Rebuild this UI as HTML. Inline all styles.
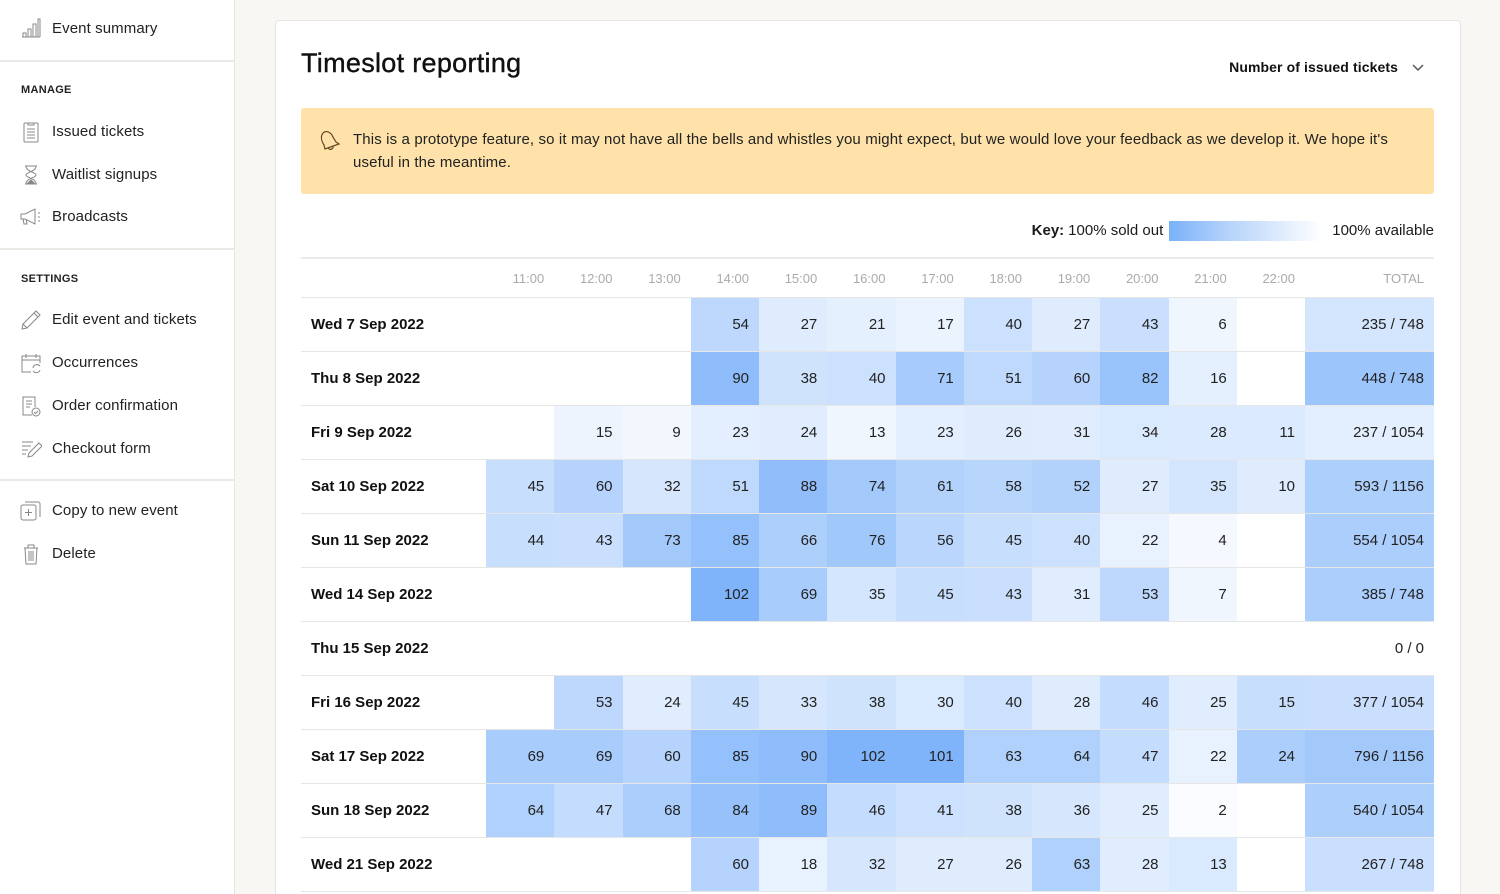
<!DOCTYPE html>
<html style="width:1500px;height:894px;overflow:hidden"><head><meta charset="utf-8"><style>
*{box-sizing:border-box;margin:0;padding:0}
body{width:1500px;height:894px;overflow:hidden;background:#f9f7f3;font-family:"Liberation Sans",sans-serif;color:#1a1a1a;position:relative}
.side{position:absolute;left:0;top:0;width:235px;height:894px;background:#fff;border-right:1px solid #e6e4e0}
.it{position:absolute;left:52px;font-size:15px;color:#222;line-height:20px;letter-spacing:.1px}
.ic{position:absolute;left:20px;width:22px;height:22px}
.hd{position:absolute;left:21px;font-size:11px;font-weight:bold;letter-spacing:.3px;color:#222}
.hr{position:absolute;left:0;width:235px;height:2px;background:#ebe9e6}
.card{position:absolute;left:275px;top:20px;width:1186px;height:874px;background:#fff;border:1px solid #e8e6e2;border-bottom:none;border-radius:4px 4px 0 0}
h1{position:absolute;left:301px;top:48px;font-size:27px;font-weight:normal;letter-spacing:.3px;color:#111;-webkit-text-stroke:.4px #111}
.dd{position:absolute;right:76px;top:59px;font-size:14px;font-weight:bold;color:#111;letter-spacing:.1px}
.ban{position:absolute;left:301px;top:108px;width:1133px;height:86px;background:#fee2a9;border-radius:3px;font-size:15px;line-height:22.5px;padding:21px 40px 0 52px;color:#222;letter-spacing:.13px}
.key{position:absolute;right:66px;top:221px;font-size:15px;height:20px;line-height:20px;display:flex;align-items:center;gap:4px}
.bar{width:153px;height:20px;background:linear-gradient(90deg,#7ab1f8,#b7d4fb 40%,#fff 100%);margin:0 6px 0 2px}
table{position:absolute;left:301px;top:257px;border-collapse:collapse;table-layout:fixed;width:1133px;font-size:15px}
td,th{height:54px;text-align:right;padding-right:10px;border-bottom:1px solid #e6e6e6;color:#222;font-weight:normal}
tr:first-child th{height:39px;color:#aaa;font-size:13px;border-top:2px solid #ebebeb;border-bottom:1px solid #e6e6e6;padding-right:10px;padding-top:2px}
td.d{text-align:left;padding-left:10px;font-weight:bold;color:#111}
</style></head><body>
<div class="side">
<svg class="ic" style="top:17px" viewBox="0 0 22 22" fill="none" stroke="#888" stroke-width="1"><path d="M2 20h18M3 20v-4h3v4M8 20V12h3v8M13 20V7h3v13M18 20V2h2v18"/></svg>
<div class="it" style="top:19px">Event summary</div>
<div class="hr" style="top:60px"></div>
<div class="hd" style="top:84px">MANAGE</div>
<svg class="ic" style="top:121px" viewBox="0 0 22 22" fill="none" stroke="#888"><rect x="4" y="2" width="14" height="19" rx="1"/><path d="M8 2v2h6V2M7 8h8M7 11h8M7 14h8M7 17h8"/></svg>
<div class="it" style="top:122px">Issued tickets</div>
<svg class="ic" style="top:164px" viewBox="0 0 22 22" fill="none" stroke="#888"><path d="M5 2h12M5 20h12M6 2c0 6 10 6 10 9s-10 3-10 9M16 2c0 6-10 6-10 9s10 3 10 9"/><path d="M8 19l3-3 3 3z" fill="#888"/></svg>
<div class="it" style="top:165px">Waitlist signups</div>
<svg class="ic" style="top:206px" viewBox="0 0 22 22" fill="none" stroke="#888"><path d="M1 8h4l10-5v15L5 13H1zM3 13l1 5h3l-1-5M18 7h2M18 11h2M18 15h2"/></svg>
<div class="it" style="top:207px">Broadcasts</div>
<div class="hr" style="top:248px"></div>
<div class="hd" style="top:273px">SETTINGS</div>
<svg class="ic" style="top:309px" viewBox="0 0 22 22" fill="none" stroke="#888"><path d="M2 20l1-5L16 2l4 4L7 19zM3 15l4 4M14 4l4 4"/></svg>
<div class="it" style="top:310px">Edit event and tickets</div>
<svg class="ic" style="top:352px" viewBox="0 0 22 22" fill="none" stroke="#888"><path d="M11 20H2V4h18v7M2 8h18M6 2v4M16 2v4M13 16a4 4 0 0 1 7-2M20 18a4 4 0 0 1-7 1"/></svg>
<div class="it" style="top:353px">Occurrences</div>
<svg class="ic" style="top:395px" viewBox="0 0 22 22" fill="none" stroke="#888"><path d="M12 20H3V2h12v10M6 6h6M6 9h6M6 12h4"/><circle cx="16" cy="17" r="4"/><path d="M14 17l1.5 1.5L18 16"/></svg>
<div class="it" style="top:396px">Order confirmation</div>
<svg class="ic" style="top:438px" viewBox="0 0 22 22" fill="none" stroke="#888"><path d="M2 4h11M2 8h9M2 12h6M2 16h4M8 19l1-4L19 5l3 3L12 18z"/></svg>
<div class="it" style="top:439px">Checkout form</div>
<div class="hr" style="top:479px"></div>
<svg class="ic" style="top:500px" viewBox="0 0 22 22" fill="none" stroke="#888"><rect x="1" y="5" width="15" height="15" rx="2"/><path d="M5 2h13a2 2 0 0 1 2 2v13M8.5 9v7M5 12.5h7"/></svg>
<div class="it" style="top:501px">Copy to new event</div>
<svg class="ic" style="top:543px" viewBox="0 0 22 22" fill="none" stroke="#888"><path d="M4 5h14M8 5V2h6v3M5 5l1 16h10l1-16M9 8v10M11 8v10M13 8v10"/></svg>
<div class="it" style="top:544px">Delete</div>
</div>
<div class="card"></div>
<h1>Timeslot reporting</h1>
<div class="dd">Number of issued tickets <svg width="12" height="8" viewBox="0 0 12 8" style="margin-left:10px" fill="none" stroke="#555" stroke-width="1.5"><path d="M1 1l5 5 5-5"/></svg></div>
<div class="ban"><svg style="position:absolute;left:18px;top:22px" width="22" height="22" viewBox="0 0 22 22" fill="none" stroke="#5a4520" stroke-width="1.2"><path d="M4 3c3-3 8-1 10 4l3 5 3 2-14 5-1-4C3 12 1 7 4 3zM9 17.5a2.5 2.5 0 0 0 5-1.5"/></svg>This is a prototype feature, so it may not have all the bells and whistles you might expect, but we would love your feedback as we develop it. We hope it's useful in the meantime.</div>
<div class="key"><b>Key:</b> 100% sold out <div class="bar"></div>100% available</div>
<table>
<colgroup><col style="width:185px"><col span="12" style="width:68.25px"><col style="width:129px"></colgroup>
<tr><th></th><th>11:00</th><th>12:00</th><th>13:00</th><th>14:00</th><th>15:00</th><th>16:00</th><th>17:00</th><th>18:00</th><th>19:00</th><th>20:00</th><th>21:00</th><th>22:00</th><th>TOTAL</th></tr>
<tr><td class="d">Wed 7 Sep 2022</td><td></td><td></td><td></td><td style="background:rgba(1,105,245,.26)">54</td><td style="background:rgba(1,105,245,.13)">27</td><td style="background:rgba(1,105,245,.10)">21</td><td style="background:rgba(1,105,245,.08)">17</td><td style="background:rgba(1,105,245,.20)">40</td><td style="background:rgba(1,105,245,.13)">27</td><td style="background:rgba(1,105,245,.21)">43</td><td style="background:rgba(1,105,245,.06)">6</td><td></td><td style="background:rgba(1,105,245,.17)">235 / 748</td></tr>
<tr><td class="d">Thu 8 Sep 2022</td><td></td><td></td><td></td><td style="background:rgba(1,105,245,.44)">90</td><td style="background:rgba(1,105,245,.19)">38</td><td style="background:rgba(1,105,245,.20)">40</td><td style="background:rgba(1,105,245,.35)">71</td><td style="background:rgba(1,105,245,.25)">51</td><td style="background:rgba(1,105,245,.29)">60</td><td style="background:rgba(1,105,245,.40)">82</td><td style="background:rgba(1,105,245,.10)">16</td><td></td><td style="background:rgba(1,105,245,.39)">448 / 748</td></tr>
<tr><td class="d">Fri 9 Sep 2022</td><td></td><td style="background:rgba(1,105,245,.07)">15</td><td style="background:rgba(1,105,245,.05)">9</td><td style="background:rgba(1,105,245,.11)">23</td><td style="background:rgba(1,105,245,.12)">24</td><td style="background:rgba(1,105,245,.06)">13</td><td style="background:rgba(1,105,245,.11)">23</td><td style="background:rgba(1,105,245,.13)">26</td><td style="background:rgba(1,105,245,.12)">31</td><td style="background:rgba(1,105,245,.15)">34</td><td style="background:rgba(1,105,245,.14)">28</td><td style="background:rgba(1,105,245,.14)">11</td><td style="background:rgba(1,105,245,.11)">237 / 1054</td></tr>
<tr><td class="d">Sat 10 Sep 2022</td><td style="background:rgba(1,105,245,.22)">45</td><td style="background:rgba(1,105,245,.29)">60</td><td style="background:rgba(1,105,245,.16)">32</td><td style="background:rgba(1,105,245,.25)">51</td><td style="background:rgba(1,105,245,.43)">88</td><td style="background:rgba(1,105,245,.36)">74</td><td style="background:rgba(1,105,245,.30)">61</td><td style="background:rgba(1,105,245,.28)">58</td><td style="background:rgba(1,105,245,.30)">52</td><td style="background:rgba(1,105,245,.13)">27</td><td style="background:rgba(1,105,245,.17)">35</td><td style="background:rgba(1,105,245,.13)">10</td><td style="background:rgba(1,105,245,.32)">593 / 1156</td></tr>
<tr><td class="d">Sun 11 Sep 2022</td><td style="background:rgba(1,105,245,.22)">44</td><td style="background:rgba(1,105,245,.21)">43</td><td style="background:rgba(1,105,245,.36)">73</td><td style="background:rgba(1,105,245,.42)">85</td><td style="background:rgba(1,105,245,.32)">66</td><td style="background:rgba(1,105,245,.37)">76</td><td style="background:rgba(1,105,245,.27)">56</td><td style="background:rgba(1,105,245,.22)">45</td><td style="background:rgba(1,105,245,.20)">40</td><td style="background:rgba(1,105,245,.09)">22</td><td style="background:rgba(1,105,245,.04)">4</td><td></td><td style="background:rgba(1,105,245,.33)">554 / 1054</td></tr>
<tr><td class="d">Wed 14 Sep 2022</td><td></td><td></td><td></td><td style="background:rgba(1,105,245,.50)">102</td><td style="background:rgba(1,105,245,.34)">69</td><td style="background:rgba(1,105,245,.17)">35</td><td style="background:rgba(1,105,245,.22)">45</td><td style="background:rgba(1,105,245,.21)">43</td><td style="background:rgba(1,105,245,.12)">31</td><td style="background:rgba(1,105,245,.26)">53</td><td style="background:rgba(1,105,245,.06)">7</td><td></td><td style="background:rgba(1,105,245,.33)">385 / 748</td></tr>
<tr><td class="d">Thu 15 Sep 2022</td><td></td><td></td><td></td><td></td><td></td><td></td><td></td><td></td><td></td><td></td><td></td><td></td><td>0 / 0</td></tr>
<tr><td class="d">Fri 16 Sep 2022</td><td></td><td style="background:rgba(1,105,245,.26)">53</td><td style="background:rgba(1,105,245,.12)">24</td><td style="background:rgba(1,105,245,.22)">45</td><td style="background:rgba(1,105,245,.16)">33</td><td style="background:rgba(1,105,245,.19)">38</td><td style="background:rgba(1,105,245,.15)">30</td><td style="background:rgba(1,105,245,.20)">40</td><td style="background:rgba(1,105,245,.13)">28</td><td style="background:rgba(1,105,245,.23)">46</td><td style="background:rgba(1,105,245,.12)">25</td><td style="background:rgba(1,105,245,.22)">15</td><td style="background:rgba(1,105,245,.21)">377 / 1054</td></tr>
<tr><td class="d">Sat 17 Sep 2022</td><td style="background:rgba(1,105,245,.34)">69</td><td style="background:rgba(1,105,245,.34)">69</td><td style="background:rgba(1,105,245,.29)">60</td><td style="background:rgba(1,105,245,.42)">85</td><td style="background:rgba(1,105,245,.44)">90</td><td style="background:rgba(1,105,245,.50)">102</td><td style="background:rgba(1,105,245,.50)">101</td><td style="background:rgba(1,105,245,.31)">63</td><td style="background:rgba(1,105,245,.31)">64</td><td style="background:rgba(1,105,245,.23)">47</td><td style="background:rgba(1,105,245,.09)">22</td><td style="background:rgba(1,105,245,.33)">24</td><td style="background:rgba(1,105,245,.36)">796 / 1156</td></tr>
<tr><td class="d">Sun 18 Sep 2022</td><td style="background:rgba(1,105,245,.31)">64</td><td style="background:rgba(1,105,245,.23)">47</td><td style="background:rgba(1,105,245,.33)">68</td><td style="background:rgba(1,105,245,.41)">84</td><td style="background:rgba(1,105,245,.44)">89</td><td style="background:rgba(1,105,245,.23)">46</td><td style="background:rgba(1,105,245,.20)">41</td><td style="background:rgba(1,105,245,.19)">38</td><td style="background:rgba(1,105,245,.16)">36</td><td style="background:rgba(1,105,245,.12)">25</td><td style="background:rgba(1,105,245,.02)">2</td><td></td><td style="background:rgba(1,105,245,.32)">540 / 1054</td></tr>
<tr><td class="d">Wed 21 Sep 2022</td><td></td><td></td><td></td><td style="background:rgba(1,105,245,.29)">60</td><td style="background:rgba(1,105,245,.09)">18</td><td style="background:rgba(1,105,245,.16)">32</td><td style="background:rgba(1,105,245,.13)">27</td><td style="background:rgba(1,105,245,.13)">26</td><td style="background:rgba(1,105,245,.31)">63</td><td style="background:rgba(1,105,245,.12)">28</td><td style="background:rgba(1,105,245,.15)">13</td><td></td><td style="background:rgba(1,105,245,.21)">267 / 748</td></tr>
</table>
</body></html>
